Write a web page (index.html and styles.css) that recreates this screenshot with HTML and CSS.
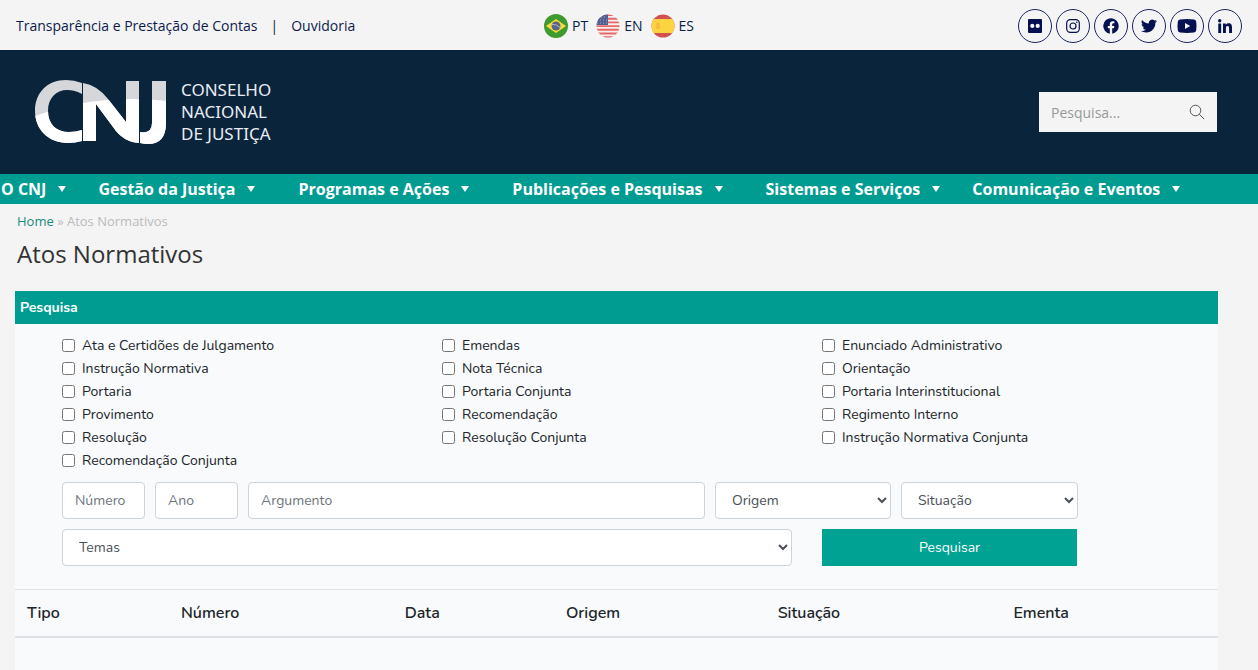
FILE: index.html
```html
<!DOCTYPE html>
<html lang="pt-BR">
<head>
<meta charset="utf-8">
<meta name="viewport" content="width=device-width, initial-scale=1">
<title>Atos Normativos - CNJ</title>
<link rel="stylesheet" href="styles.css">
</head>
<body>
<div class="topbar">
  <nav class="top-links" aria-label="Institucional">
    <a href="#">Transparência e Prestação de Contas</a>
    <span class="divider">|</span>
    <a href="#">Ouvidoria</a>
  </nav>
  <nav class="languages" aria-label="Idiomas">
    <a href="#">
      <svg class="flag" viewBox="0 0 24 24" aria-hidden="true"><circle cx="12" cy="12" r="12" fill="#3f9b2f"/><path d="M12 5 22 12 12 19 2 12z" fill="#f7dc3c"/><circle cx="12" cy="12" r="4.500" fill="#5a6484"/><path d="M8 10.500q5-.5 8 3" stroke="#b8bcc5" fill="none"/></svg>
      PT</a>
    <a href="#">
      <svg class="flag" viewBox="0 0 24 24" aria-hidden="true"><clipPath id="us"><circle cx="12" cy="12" r="11.500"/></clipPath><g clip-path="url(#us)"><path fill="#f5eeee" d="M0 0h24v24H0z"/><path d="M0 1h24M0 4.700h24M0 8.400h24M0 12.100h24M0 15.800h24M0 19.500h24M0 23.200h24" stroke="#e86a68" stroke-width="1.900"/><path fill="#506092" d="M0 0h12v11H0z"/><path d="M2 3h9M1 6h10M1 9h10" stroke="#a2abc6" stroke-dasharray="1 2"/></g></svg>
      EN</a>
    <a href="#">
      <svg class="flag" viewBox="0 0 24 24" aria-hidden="true"><clipPath id="es"><circle cx="12" cy="12" r="11.500"/></clipPath><g clip-path="url(#es)"><path fill="#d35050" d="M0 0h24v24H0z"/><path fill="#fcd440" d="M0 5h24v14H0z"/><path fill="#f6bd45" d="M5 9h4v6H5z"/></g></svg>
      ES</a>
  </nav>
  <nav class="social" aria-label="Redes sociais">
    <a href="#" aria-label="Flickr"><svg viewBox="0 0 16 16"><path fill-rule="evenodd" d="M2 1h12q1 0 1 1v12q0 1-1 1H2q-1 0-1-1V2q0-1 1-1zm3.300 4.800a2.100 2.100 0 1 0 0 4.200 2.100 2.100 0 0 0 0-4.200zm5.400 0a2.100 2.100 0 1 0 0 4.200 2.100 2.100 0 0 0 0-4.200z"/></svg></a>
    <a href="#" aria-label="Instagram"><svg viewBox="0 0 16 16"><rect x="1.700" y="1.700" width="12.600" height="12.600" rx="3.600" fill="none" stroke="currentColor" stroke-width="1.200"/><circle cx="8" cy="8" r="3" fill="none" stroke="currentColor" stroke-width="1.200"/><circle cx="11.800" cy="4.200" r=".8"/></svg></a>
    <a href="#" aria-label="Facebook"><svg viewBox="0 0 16 16"><path d="M15.750 8a7.750 7.750 0 1 0-8.960 7.660v-5.420H4.820V8h1.970V6.290c0-1.940 1.160-3.010 2.930-3.010.85 0 1.730.15 1.730.15v1.910h-.97c-.97 0-1.270.6-1.270 1.210V8h2.150l-.34 2.240H9.210v5.420A7.750 7.750 0 0 0 15.750 8z"/></svg></a>
    <a href="#" aria-label="Twitter"><svg viewBox="0 0 16 16"><path d="M14.360 4.740c.01.140.01.280.01.420 0 4.340-3.300 9.340-9.330 9.340A9.270 9.270 0 0 1 0 13.030a6.600 6.600 0 0 0 4.860-1.360 3.290 3.290 0 0 1-3.070-2.280c.5.080.98.080 1.480-.05A3.280 3.280 0 0 1 .64 6.110v-.04c.44.240.95.400 1.480.42A3.280 3.280 0 0 1 1.110 2.100a9.320 9.320 0 0 0 6.770 3.430 3.290 3.290 0 0 1 5.600-2.990 6.450 6.450 0 0 0 2.080-.8 3.270 3.270 0 0 1-1.440 1.810A6.580 6.580 0 0 0 16 3.040a7 7 0 0 1-1.640 1.700z"/></svg></a>
    <a href="#" aria-label="YouTube"><svg class="wide" viewBox="0 0 20 16"><path fill-rule="evenodd" d="M3 1.500q7-.8 14 0 2 .3 2.200 2.300.6 4.200 0 8.400-.2 2-2.200 2.300-7 .8-14 0-2-.3-2.200-2.300-.6-4.200 0-8.400Q1 1.800 3 1.500zM8 5v6l5.200-3z"/></svg></a>
    <a href="#" aria-label="LinkedIn"><svg viewBox="0 0 16 16"><circle cx="2.700" cy="2.700" r="1.700"/><path d="M1.250 5.600h2.900V15h-2.900zM6 5.600h2.800v1.300c.5-.9 1.500-1.550 2.800-1.550 2.900 0 3.400 1.900 3.400 4.450V15h-2.900v-4.600c0-1.100 0-2.500-1.500-2.500s-1.700 1.200-1.700 2.400V15H6z"/></svg></a>
  </nav>
</div>

<header class="masthead">
  <a class="brand" href="#">
    <svg class="brand-mark" viewBox="0 0 132 66" aria-hidden="true">
      <defs>
        <clipPath id="tone"><path d="M0 37Q25 28 48 24Q90 17 132 22V66H0z"/></clipPath>
        <g id="mark">
          <path d="M47 4Q39 1 31 1C12 1 0 14 0 32s13 32 33 32q7 0 14-2V51q-6 2-13 2C21 53 13 45 13 32s8-21 19-21q8 0 15 4z"/>
          <path d="M48 4Q62 6 73 20L91 43V2h13v62Q88 63 78 48L61 25v37H48z"/>
          <path d="M117 2h14v42q0 21-18 21-4 0-8-1V53q12 2 12-9z"/>
        </g>
      </defs>
      <use href="#mark" fill="#d5d7da"/>
      <g clip-path="url(#tone)"><use href="#mark" fill="#fff"/></g>
    </svg>
    <span class="brand-name">CONSELHO<br>NACIONAL<br>DE JUSTIÇA</span>
  </a>
  <form class="site-search" role="search">
    <input type="search" aria-label="Pesquisa" placeholder="Pesquisa...">
    <button type="button" aria-label="Pesquisar no site"><svg viewBox="0 0 16 16"><circle cx="6.500" cy="6.500" r="5.300"/><path d="m10.300 10.300 4.800 4.800"/></svg></button>
  </form>
</header>

<nav class="menu" aria-label="Principal">
  <a href="#">O CNJ</a>
  <a href="#">Gestão da Justiça</a>
  <a class="spaced" href="#">Programas e Ações</a>
  <a class="spaced" href="#">Publicações e Pesquisas</a>
  <a class="spaced" href="#">Sistemas e Serviços</a>
  <a href="#">Comunicação e Eventos</a>
</nav>

<main class="page">
  <div class="crumbs"><a href="#">Home</a> » Atos Normativos</div>
  <h1>Atos Normativos</h1>
  <section class="panel">
    <h2>Pesquisa</h2>
    <form class="filters">
      <div class="types">
        <label><input type="checkbox">Ata e Certidões de Julgamento</label>
        <label><input type="checkbox">Emendas</label>
        <label><input type="checkbox">Enunciado Administrativo</label>
        <label><input type="checkbox">Instrução Normativa</label>
        <label><input type="checkbox">Nota Técnica</label>
        <label><input type="checkbox">Orientação</label>
        <label><input type="checkbox">Portaria</label>
        <label><input type="checkbox">Portaria Conjunta</label>
        <label><input type="checkbox">Portaria Interinstitucional</label>
        <label><input type="checkbox">Provimento</label>
        <label><input type="checkbox">Recomendação</label>
        <label><input type="checkbox">Regimento Interno</label>
        <label><input type="checkbox">Resolução</label>
        <label><input type="checkbox">Resolução Conjunta</label>
        <label><input type="checkbox">Instrução Normativa Conjunta</label>
        <label><input type="checkbox">Recomendação Conjunta</label>
      </div>
      <div class="fields">
        <input class="control" type="text" aria-label="Número" placeholder="Número">
        <input class="control" type="text" aria-label="Ano" placeholder="Ano">
        <input class="control" type="text" aria-label="Argumento" placeholder="Argumento">
        <select class="control" aria-label="Origem"><option>Origem</option></select>
        <select class="control" aria-label="Situação"><option>Situação</option></select>
      </div>
      <div class="fields-bottom">
        <select class="control" aria-label="Temas"><option>Temas</option></select>
        <button class="submit" type="button">Pesquisar</button>
      </div>
    </form>
    <table class="results">
      <colgroup><col class="c-tipo"><col class="c-numero"><col class="c-data"><col class="c-origem"><col class="c-situacao"><col></colgroup>
      <thead><tr><th scope="col">Tipo</th><th scope="col">Número</th><th scope="col">Data</th><th scope="col">Origem</th><th scope="col">Situação</th><th scope="col">Ementa</th></tr></thead>
    </table>
  </section>
</main>
</body>
</html>
```
FILE: styles.css
```css
* { box-sizing: border-box; }

body {
  margin: 0;
  min-height: 100vh;
  display: flex;
  flex-direction: column;
  background: #f4f4f4;
  color: #212529;
  font: 14px/20px "Open Sans", "Noto Sans", sans-serif;
}

a { color: inherit; text-decoration: none; }
svg { display: block; fill: currentColor; }

.topbar {
  display: grid;
  grid-template-columns: 1fr auto 1fr;
  align-items: center;
  height: 50px;
  padding: 2px 16px 0;
  color: #0c1b4d;
}
.top-links { display: flex; gap: 13px; }
.languages { display: flex; gap: 8px; margin-right: 20px; }
.languages a { display: flex; align-items: center; gap: 4px; }
.flag { width: 24px; height: 24px; }
.social { display: flex; justify-content: flex-end; gap: 4px; color: #04104f; }
.social a {
  display: grid;
  place-items: center;
  width: 34px;
  height: 34px;
  border: 1px solid #1c2660;
  border-radius: 50%;
}
.social svg { width: 16px; height: 16px; }
.social .wide { width: 20px; }

.masthead {
  display: flex;
  align-items: center;
  justify-content: space-between;
  height: 124px;
  padding: 0 41px 0 35px;
  background: #0a243b;
}
.brand { display: flex; align-items: center; gap: 14px; color: #e8edf5; }
.brand-mark { width: 132px; height: 66px; }
.brand-name { font: 17px/22px "Noto Sans", "Open Sans", sans-serif; }
.site-search {
  display: flex;
  align-items: center;
  width: 178px;
  height: 40px;
  background: #f4f4f4;
}
.site-search input {
  flex: 1;
  min-width: 0;
  height: 100%;
  padding: 0 0 0 12px;
  border: 0;
  background: none;
  font: inherit;
}
.site-search input::placeholder { color: #999; }
.site-search button {
  padding: 0 12px;
  border: 0;
  background: none;
  color: #555;
}
.site-search svg { width: 16px; height: 16px; fill: none; stroke: currentColor; }

.menu {
  display: flex;
  gap: 32px;
  height: 30px;
  padding-left: 1px;
  background: #009c92;
  color: #fff;
  font-size: 16px;
  font-weight: 700;
  line-height: 30px;
  white-space: nowrap;
}
.menu a { display: flex; align-items: center; gap: 12px; }
.menu a::after {
  content: "";
  border: 4px solid transparent;
  border-top: 6px solid #fff;
  border-bottom: 0;
}
.menu .spaced { margin-left: 11px; }

.page { flex: 1; display: flex; flex-direction: column; padding: 7px 40px 0 15px; }
.crumbs { padding-left: 2px; color: #bbb; font-size: 13px; }
.crumbs a { color: #1a8a80; }
h1 { margin: 6px 0 21px; padding-left: 2px; color: #333; font-size: 24px; font-weight: 400; line-height: 33px; }

.panel { flex: 1; background: #f8fafc; font-family: Nunito, Lato, sans-serif; font-size: 14px; }
.panel h2 {
  margin: 0;
  padding: 0 5px;
  background: #009c92;
  color: #fff;
  font-size: 14px;
  font-weight: 700;
  line-height: 33px;
}
.filters { padding: 10px 16px 23px 47px; }
.types { display: grid; grid-template-columns: repeat(3, 1fr); line-height: 23px; }
.types label { display: flex; align-items: center; gap: 7px; }
.types input { width: 13px; height: 13px; margin: 0; }
.fields, .fields-bottom { display: grid; margin: 10px 124px 0 0; }
.fields { grid-template-columns: 83fr 83fr 457fr 176fr 177fr; gap: 10px; }
.fields-bottom { grid-template-columns: 730fr 255fr; gap: 30px; margin-right: 125px; }
.control {
  width: 100%;
  min-width: 0;
  height: 37px;
  padding: 6px 12px;
  border: 1px solid #ced4da;
  border-radius: 4px;
  background: #fff;
  color: #495057;
  font: inherit;
}
select.control { padding-right: 0; }
.control::placeholder { color: #6c757d; }
.submit { height: 37px; border: 0; background: #00a294; color: #fff; font: inherit; }

.results {
  width: 100%;
  border-collapse: separate;
  border-spacing: 0;
  table-layout: fixed;
  font-size: 16px;
  line-height: 24px;
}
.results th {
  padding: 11px 12px;
  border-top: 1px solid #dee2e6;
  border-bottom: 2px solid #dee2e6;
  font-weight: 600;
  text-align: left;
}
.c-tipo { width: 12.8%; }
.c-numero { width: 18.6%; }
.c-data { width: 13.4%; }
.c-origem { width: 17.6%; }
.c-situacao { width: 19.6%; }
```
